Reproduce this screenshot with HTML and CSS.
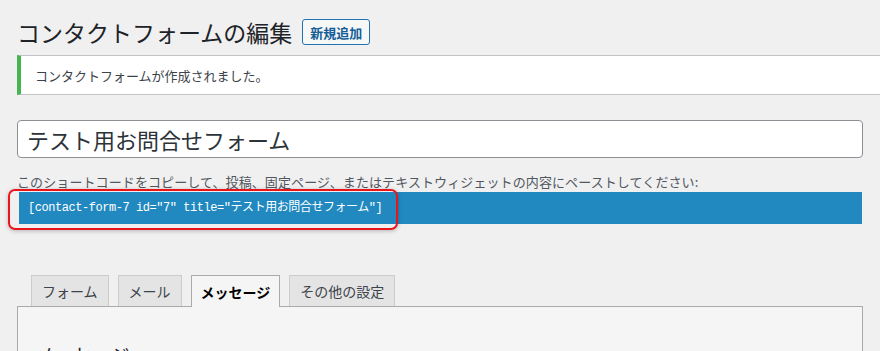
FILE: index.html
```html
<!DOCTYPE html>
<html lang="ja">
<head>
    <meta charset="UTF-8">
    <meta name="viewport" content="width=device-width, initial-scale=1.0">
    <title>コンタクトフォームの編集</title>
    <link rel="stylesheet" href="styles.css">
</head>
<body>
    <div class="wrap">
        <div class="page-header">
            <h1 class="page-title">コンタクトフォームの編集</h1>
            <a href="#" class="add-new">新規追加</a>
        </div>

        <div class="notice">
            <p>コンタクトフォームが作成されました。</p>
        </div>

        <input type="text" class="title-input" value="テスト用お問合せフォーム">

        <p class="shortcode-desc">このショートコードをコピーして、投稿、固定ページ、またはテキストウィジェットの内容にペーストしてください:</p>
        <div class="shortcode-row">
            <div class="shortcode">[contact-form-7 id="7" title="テスト用お問合せフォーム"]</div>
            <span class="highlight"></span>
        </div>

        <!-- タブ -->
        <ul class="tabs">
            <li class="tab">フォーム</li>
            <li class="tab">メール</li>
            <li class="tab active">メッセージ</li>
            <li class="tab">その他の設定</li>
        </ul>
        <div class="tab-panel">
            <h2 class="panel-title">メッセージ</h2>
        </div>
    </div>
</body>
</html>
```

FILE: styles.css
```css
:root {
    --bg-color: #f0f0f1;
    --text-color: #3c434a;
    --link-color: #2271b1;
    --border-color: #8c8f94;
}

* {
    margin: 0;
    padding: 0;
    box-sizing: border-box;
}

body {
    font-family: "Noto Sans CJK JP", "Noto Sans", sans-serif;
    font-size: 13px;
    color: var(--text-color);
    background-color: var(--bg-color);
    overflow: hidden;
}

.wrap {
    padding: 17px 17px 0;
}

.page-header {
    display: flex;
    align-items: center;
    gap: 10px;
    height: 30px;
}

.page-title {
    font-size: 23px;
    font-weight: 400;
    line-height: 30px;
    color: #1d2327;
}

.add-new {
    display: inline-flex;
    align-items: center;
    height: 26px;
    padding: 0 7px;
    border: 1px solid var(--link-color);
    border-radius: 3px;
    background-color: #f6f7f7;
    color: #135e96;
    font-size: 13px;
    font-weight: 700;
    text-decoration: none;
}

.notice {
    margin: 8px -17px 0 0;
    height: 40px;
    display: flex;
    align-items: center;
    padding-left: 14px;
    background-color: #fff;
    border: 1px solid #c3c4c7;
    border-left: 4px solid #46b450;
    border-right: none;
}

.notice p {
    font-size: 13px;
}

.title-input {
    display: block;
    width: 100%;
    height: 38px;
    margin-top: 25px;
    padding: 0 9px;
    border: 1px solid var(--border-color);
    border-radius: 4px;
    background-color: #fff;
    font-family: inherit;
    font-size: 22px;
    color: #2c3338;
    outline: none;
}

.shortcode-desc {
    margin-top: 15px;
    line-height: 18px;
    letter-spacing: 0.1px;
    color: #50575e;
}

.shortcode-row {
    position: relative;
    margin-top: 1px;
    padding-left: 2px;
    padding-right: 1px;
}

.shortcode {
    height: 32px;
    line-height: 32px;
    padding-left: 9px;
    background-color: #2189c0;
    color: #fff;
    font-family: "Liberation Mono", "Noto Sans CJK JP", monospace;
    font-size: 12px;
    letter-spacing: -0.45px;
    white-space: nowrap;
}

/* 注釈の赤枠 */
.highlight {
    position: absolute;
    left: -9px;
    top: -3px;
    width: 390px;
    height: 41px;
    border: 2px solid #e8161b;
    border-radius: 7px;
    box-shadow: 0 1px 4px rgba(0, 0, 0, 0.25);
    pointer-events: none;
}

.tabs {
    list-style: none;
    display: flex;
    gap: 9px;
    margin-top: 51px;
    padding-left: 14px;
    position: relative;
    z-index: 1;
}

.tab {
    height: 32px;
    margin-bottom: -1px;
    padding: 0 10px;
    display: flex;
    align-items: center;
    font-size: 14px;
    color: #3c434a;
    background-color: #e4e4e4;
    border: 1px solid #ccc;
    border-bottom: none;
}

.tab.active {
    background-color: #f5f5f5;
    border-color: #aaa;
    color: #000;
    font-weight: 700;
    padding: 0 9px;
}

.tab:not(.active) {
    height: 31px;
    margin-bottom: 0;
    align-self: flex-start;
}

.tab-panel {
    height: 80px;
    background-color: #f5f5f5;
    border: 1px solid #aaa;
    padding: 34px 17px;
}

.panel-title {
    font-size: 19px;
    font-weight: 400;
    color: #1d2327;
}
```
